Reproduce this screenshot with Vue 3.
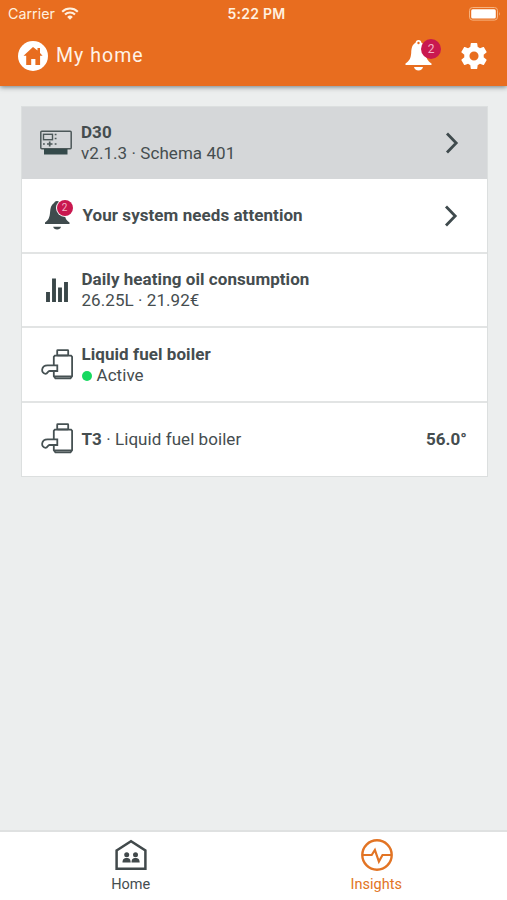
<script setup>
const rows = [
  { id: 'device', icon: 'device', title: 'D30', sub: 'v2.1.3 · Schema 401', chevron: true },
  { id: 'alert', icon: 'bell', title: 'Your system needs attention', badge: 2, chevron: true },
  { id: 'oil', icon: 'bars', title: 'Daily heating oil consumption', sub: '26.25L · 21.92€' },
  { id: 'boiler', icon: 'boiler', title: 'Liquid fuel boiler', sub: 'Active', active: true },
  { id: 'sensor', icon: 'boiler', title: 'T3', suffix: ' · Liquid fuel boiler', value: '56.0°' },
]
</script>

<template>
  <div class="screen">
    <header class="header">
      <div class="status">
        <div class="carrier">
          <span>Carrier</span>
          <svg class="wifi" viewBox="0 0 18 13" width="18" height="13">
            <path d="M1.2 4.7a11.2 11.2 0 0 1 15.6 0M4 7.6a7.1 7.1 0 0 1 10 0" fill="none" stroke="currentColor" stroke-width="2.1" />
            <path d="M6.2 9.9a4 4 0 0 1 5.6 0L9 12.7z" fill="currentColor" />
          </svg>
        </div>
        <div class="time">5:22 PM</div>
        <svg class="battery" viewBox="0 0 32 14" width="32" height="14">
          <rect x="0.5" y="0.5" width="28" height="12.6" rx="3" fill="none" stroke="#f6b27f" />
          <rect x="2.2" y="2.2" width="24.6" height="9.2" rx="1.5" fill="#fff" />
          <path d="M30 4.8q1.7 2 0 4z" fill="#f6b27f" />
        </svg>
      </div>
      <div class="bar">
        <svg class="home-logo" viewBox="0 0 30 30" width="30" height="30">
          <circle cx="15" cy="15" r="15" fill="#fff" />
          <path d="M15 6 5.5 14.7h2.7v9.2h5v-5.8h4.2v5.8h4.7v-9.2h2.500L22 12V7h-2.500v2.600z" fill="#e86d1f" />
        </svg>
        <h1>My home</h1>
        <div class="bell">
          <svg viewBox="0 0 28 32" width="28" height="32">
            <path d="M13.500 0a2.800 2.800 0 0 0-2.800 2.600C7 4.800 6.400 8.500 6.200 13 5.800 18.200 4.500 20.800 .500 23.500V25h26v-1.500c-4-2.700-5.300-5.300-5.700-10.500-.2-4.500-.8-8.200-4.500-10.400A2.800 2.800 0 0 0 13.500 0zM9 27h9a4.600 4.300 0 0 1-9 0z" fill="#fff" />
            <circle cx="13.500" cy="3" r="1.200" fill="#e86d1f" />
          </svg>
          <span class="badge">2</span>
        </div>
        <svg class="gear" viewBox="2 2 20 20" width="26" height="26">
          <path fill="#fff" d="M19.430 12.980c.040-.320.070-.640.070-.980s-.030-.660-.070-.980l2.110-1.650c.190-.150.240-.420.120-.640l-2-3.460c-.120-.220-.390-.300-.610-.220l-2.490 1c-.520-.400-1.080-.730-1.690-.980l-.380-2.650C14.460 2.180 14.250 2 14 2h-4c-.250 0-.460.180-.490.420l-.380 2.650c-.610.250-1.170.590-1.690.980l-2.490-1c-.230-.090-.490 0-.610.220l-2 3.460c-.130.220-.070.490.120.640l2.110 1.650c-.040.320-.070.650-.070.980s.030.660.070.980l-2.110 1.650c-.190.150-.240.420-.120.640l2 3.460c.120.220.390.300.610.220l2.490-1c.520.400 1.080.730 1.690.980l.380 2.650c.030.240.240.420.490.420h4c.250 0 .460-.180.490-.420l.380-2.650c.610-.250 1.170-.590 1.690-.980l2.490 1c.230.090.490 0 .610-.220l2-3.460c.120-.220.070-.490-.120-.640zM12 15.500a3.500 3.500 0 1 1 0-7 3.500 3.500 0 0 1 0 7z" />
        </svg>
      </div>
    </header>

    <main>
      <ul class="list">
        <li v-for="row in rows" :key="row.id" class="row" :class="row.id">
          <div class="icon">
            <svg v-if="row.icon === 'device'" viewBox="0 0 36 36" width="36" height="36">
              <rect x="0.800" y="6.300" width="30.400" height="17.400" rx="1" fill="none" stroke="#4d5859" stroke-width="1.500" />
              <rect x="3.500" y="9.300" width="9" height="5.400" fill="none" stroke="#4d5859" stroke-width="1.400" />
              <path d="M14.700 9.500h1.800M14.700 13.500h1.800M3 19h1.800M14.700 19h1.800M7 19h5.500M9.700 16.500v5" stroke="#4d5859" stroke-width="1.700" />
              <path d="M4 24h23.500v5.500H4z" fill="#34494a" />
            </svg>
            <svg v-else-if="row.icon === 'bell'" viewBox="0 0 36 36" width="36" height="36">
              <path d="M17 3c-2 0-2.500 1.500-3 2-3 2-3.600 5-3.900 9-.4 5-1.300 8-5.100 10.500V26h24.500v-1.500C25.700 22 24.800 19 24.400 14 24.100 10 23.300 7 20.200 5 19.500 4.500 19 3 17 3zM13.200 28.700h7.800a4 3.500 0 0 1-7.800 0z" fill="#3f4b4d" />
            </svg>
            <svg v-else-if="row.icon === 'bars'" viewBox="0 0 36 36" width="36" height="36">
              <path d="M8 20v10M14 6.500V30M20 15.500V30M26 10v20" stroke="#3a4749" stroke-width="3.900" />
            </svg>
            <svg v-else viewBox="0 0 36 36" width="36" height="36" fill="none" stroke="#465153" stroke-width="1.800">
              <rect x="17.200" y="3.200" width="11" height="5.100" rx="0.500" />
              <path d="M13.800 18V9.800l1-1.100h16.300l1 1.100V29.300l-1.600 2H15.400l-1.600-2V24" />
              <path d="M14 29.500h18" stroke-width="2" />
              <path d="M17.300 18.300H7.500C1 18.300.500 26.500 5.500 26.800c2.500 0 2-2.800 4-2.800h7.800z" />
            </svg>
            <span v-if="row.badge" class="badge small">{{ row.badge }}</span>
          </div>
          <div class="text">
            <div class="title"><strong>{{ row.title }}</strong><span v-if="row.suffix">{{ row.suffix }}</span></div>
            <div v-if="row.sub" class="sub"><i v-if="row.active" class="dot"></i>{{ row.sub }}</div>
          </div>
          <svg v-if="row.chevron" class="chevron" viewBox="0 0 14 22" width="14" height="22">
            <path d="M2 1.500 11.200 11 2 20.500" fill="none" stroke="#3f4a4d" stroke-width="2.800" />
          </svg>
          <strong v-if="row.value" class="value">{{ row.value }}</strong>
        </li>
      </ul>
    </main>

    <nav class="tabs">
      <a class="tab home">
        <svg viewBox="0 0 32 32" width="32" height="32">
          <path d="M1.600 11.500 16 2.200l14.400 9.300v18.200H1.600z" fill="none" stroke="#41494b" stroke-width="2.500" />
          <g fill="#41494b">
            <circle cx="11.700" cy="15.700" r="2.500" />
            <circle cx="20.500" cy="15.700" r="2.500" />
            <path d="M7.500 23.500c0-3.500 1.700-4.600 4.200-4.600s4 1.100 4 4.600zM16.500 23.500c0-3.500 1.500-4.600 4-4.600s4.200 1.100 4.200 4.600z" />
          </g>
        </svg>
        <span>Home</span>
      </a>
      <a class="tab insights">
        <svg viewBox="0 0 32 32" width="32" height="32" fill="none" stroke="#e27424">
          <circle cx="16" cy="16" r="14.700" stroke-width="2.400" />
          <path d="M1.500 16h9.200l3.200-5 4 11.500 3.600-6.500H31" stroke-width="2.200" />
        </svg>
        <span>Insights</span>
      </a>
    </nav>
  </div>
</template>

<style>
body { margin: 0; }
</style>

<style scoped>
.screen {
  display: flex;
  flex-direction: column;
  height: 900px;
  background: #eceeee;
  font-family: Roboto, "Liberation Sans", sans-serif;
  color: #454d4f;
}
.header {
  height: 86px;
  background: #e86d1f;
  color: #fff;
  box-shadow: 0 1px 5px rgba(40, 60, 65, 0.65);
  display: flex;
  flex-direction: column;
}
.status {
  height: 27px;
  display: grid;
  grid-template-columns: 1fr auto 1fr;
  align-items: center;
  padding: 0 6px 0 8px;
  color: #fff0df;
}
.carrier {
  display: flex;
  align-items: center;
  gap: 6px;
  font: 14.300px/18px Inter, sans-serif;
}
.time { font: 600 14px/18px Inter, sans-serif; letter-spacing: 0.250px; padding-left: 4px; }
.battery { justify-self: end; }
.bar {
  display: flex;
  align-items: center;
  height: 57px;
  padding: 0 20px 0 18px;
}
h1 {
  flex: 1;
  margin: 0 0 0 8px;
  font-size: 19.500px;
  line-height: 24px;
  font-weight: 400;
  letter-spacing: 1.050px;
  color: #fff3e7;
}
.bell { position: relative; width: 28px; height: 32px; margin-right: 28px; }
.bell svg, .icon svg { display: block; }
.badge {
  position: absolute;
  left: 16px;
  top: -1px;
  width: 20px;
  height: 20px;
  border-radius: 50%;
  background: #c9184f;
  color: #f4b4c8;
  font-size: 12px;
  line-height: 20px;
  text-align: center;
}
.badge.small {
  left: 17px;
  top: 2px;
  width: 16px;
  height: 16px;
  line-height: 16px;
  font-size: 10px;
  box-shadow: 0 0 0 1px #fff;
}
main { flex: 1; padding: 20px 19px 0 20.500px; }
.list {
  list-style: none;
  margin: 0;
  padding: 0;
  border: solid #dcdfdf;
  border-width: 1px 1.500px 1.500px;
  background: #fff;
}
.row {
  display: grid;
  grid-template-columns: 42px 1fr auto;
  align-items: center;
  height: 74.500px;
  box-sizing: border-box;
  padding: 1px 20px 0 18px;
  border-bottom: 2px solid #e2e4e4;
}
.row.device { height: 72px; background: #d5d7d9; border: 0; padding: 0 28px 1px 18px; }
.row.device .text { margin-left: -0.500px; }
.row.alert { padding-right: 29.500px; }
.row.alert .text { margin-left: 1px; }
.row:last-child { height: 73px; border: 0; padding-top: 0; }
.icon { position: relative; }
.text { font-size: 17px; line-height: 21px; letter-spacing: 0.060px; white-space: pre; }
.sub { display: flex; align-items: center; }
.dot {
  width: 10px;
  height: 10px;
  margin: 1px 5px 0 0;
  border-radius: 50%;
  background: #16d960;
}
.value { font-size: 17px; letter-spacing: 0.060px; }
.tabs {
  display: grid;
  grid-template-columns: 1fr 1fr;
  box-sizing: border-box;
  height: 70px;
  padding: 0 8px;
  border-top: 2px solid #dfe1e1;
  background: #fff;
}
.tab {
  display: flex;
  flex-direction: column;
  align-items: center;
  gap: 2px;
  padding-top: 7px;
  font-size: 14.500px;
  line-height: 24px;
}
.tab.insights { color: #e27424; }
.tab.insights svg { margin-left: 2px; }
</style>
